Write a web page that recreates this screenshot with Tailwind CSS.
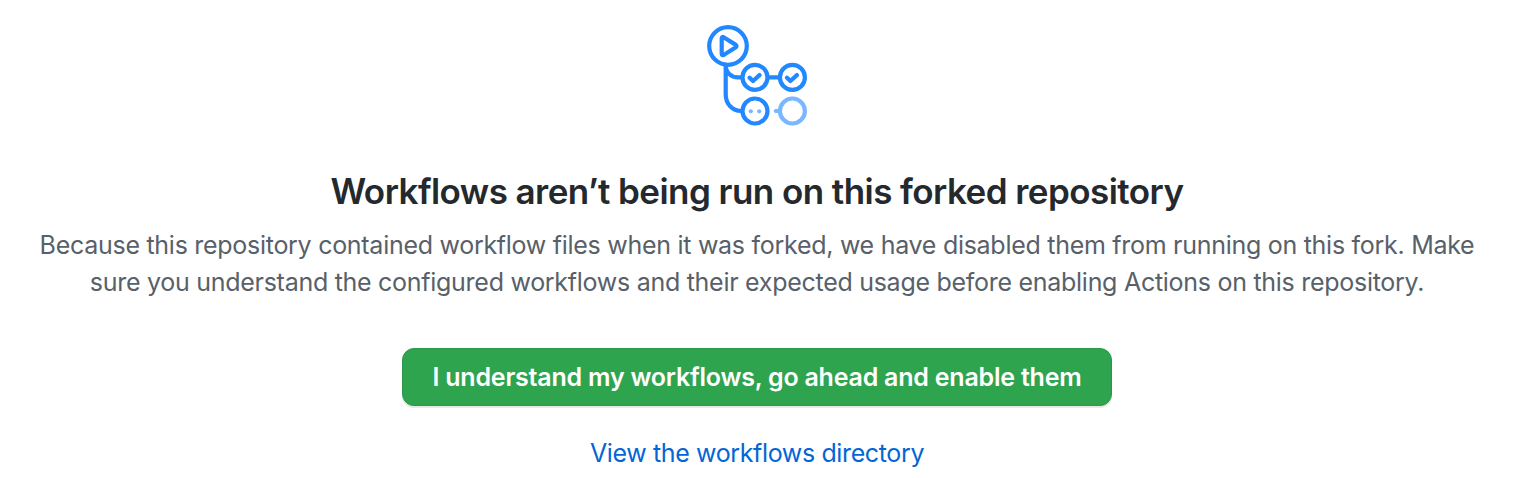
<!DOCTYPE html>
<html lang="en">
<head>
<meta charset="utf-8">
<title>Workflows</title>
<script src="https://cdn.jsdelivr.net/npm/@tailwindcss/browser@4"></script>
</head>
<body class="overflow-hidden bg-white font-['Inter',sans-serif]">
<main class="flex w-[1514px] flex-col items-center pt-[15px] text-center">
  <svg class="size-[120px]" viewBox="0 0 120 120" fill="none" stroke="#2188ff" stroke-width="4.2" stroke-linecap="round" stroke-linejoin="round">
    <circle cx="31" cy="31" r="18.8"/>
    <path d="M24.700 23.200v15.800a1.200 1.200 0 0 0 1.900 1L38.900 32.200a1.400 1.400 0 0 0 0-2.300L26.600 22.200a1.200 1.200 0 0 0-1.900 1z"/>
    <path d="M28.700 50v29.500C28.700 89 35.500 96 44 96M28.700 50C28.700 57.500 34 62.400 41 62.400h3M72 62.400h9.500" stroke-linecap="butt"/>
    <circle cx="58" cy="62.400" r="12.500"/>
    <circle cx="95.400" cy="62.400" r="12.500"/>
    <circle cx="58" cy="96" r="12.500"/>
    <path d="m52.600 62.700 3.400 3.300 6.500-5.900M90 62.700l3.400 3.300 6.500-5.900"/>
    <g stroke="#79b8ff"><circle cx="95.400" cy="96" r="12.500"/><path d="M78.800 96h3.500"/></g>
    <g fill="#79b8ff" stroke="none"><circle cx="53.800" cy="96.300" r="2.100"/><circle cx="62.200" cy="96.300" r="2.100"/></g>
  </svg>
  <h1 class="mt-[32px] text-[35px] leading-[48px] font-semibold tracking-[-0.55px] text-[#24292e]">Workflows aren’t being run on this forked repository</h1>
  <p class="mt-[12px] text-[25px] leading-[37px] tracking-[-0.28px] whitespace-nowrap text-[#586069]">Because this repository contained workflow files when it was forked, we have disabled them from running on this fork. Make<br>sure you understand the configured workflows and their expected usage before enabling Actions on this repository.</p>
  <button class="mt-[47px] h-[58px] w-[710px] rounded-[12px] border border-[#2c974b] bg-[#2ea44f] pt-[2px] text-[25px] font-semibold tracking-[-0.22px] whitespace-nowrap text-white shadow-[0_2px_0_rgba(27,31,35,0.1)]">I understand my workflows, go ahead and enable them</button>
  <a class="mt-[29px] text-[25px] leading-[37px] tracking-[-0.37px] text-[#0366d6]">View the workflows directory</a>
</main>
</body>
</html>
